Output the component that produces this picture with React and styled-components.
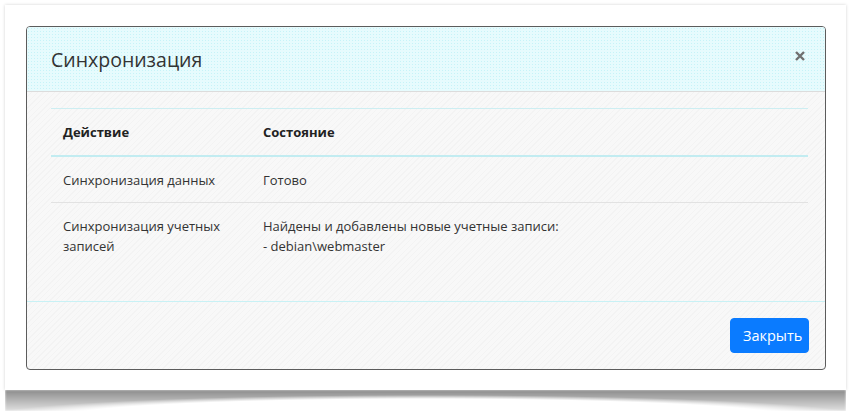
import styled, { createGlobalStyle } from "styled-components";

const GlobalStyle = createGlobalStyle`
  body {
    margin: 0;
    background: #fff;
    font-family: "Open Sans", "Noto Sans", sans-serif;
    color: #333;
  }
`;

const Page = styled.div`
  padding: 5px 0 0 5px;
  width: 841px;
`;

const Paper = styled.div`
  background: #fff;
  box-shadow: 0 0 3px rgba(0, 0, 0, 0.18);
  padding: 21px 20px 20px 21px;
`;

const CurlShadow = styled.div`
  height: 21px;
  background: linear-gradient(to bottom, rgba(0, 0, 0, 0.45), rgba(0, 0, 0, 0.12));
  -webkit-mask-image: radial-gradient(440px 22px at 50% 27px, transparent 82%, #000 100%);
  mask-image: radial-gradient(440px 22px at 50% 27px, transparent 82%, #000 100%);
  filter: blur(1px);
`;

const Modal = styled.div`
  border: 1px solid #5c5c5c;
  border-radius: 4px;
  overflow: hidden;
  display: flex;
  flex-direction: column;
  background-color: #f8f8f8;
  background-image: repeating-linear-gradient(
    -45deg,
    rgba(0, 0, 0, 0.018) 0 1px,
    transparent 1px 4px
  );
`;

const Header = styled.div`
  display: flex;
  align-items: center;
  justify-content: space-between;
  padding: 18px 19px 16px 24px;
  border-bottom: 1px solid #dcdcdc;
  background-color: #e6fbfd;
  background-image: radial-gradient(#c6f3f8 0.8px, transparent 1px);
  background-size: 3px 3px;
`;

const Title = styled.h5`
  margin: 0;
  font-size: 19.5px;
  font-weight: 400;
  line-height: 30px;
  color: #333;
`;

const CloseButton = styled.button`
  border: none;
  background: transparent;
  padding: 0;
  width: 12px;
  height: 12px;
  display: flex;
  align-items: center;
  justify-content: center;
  cursor: pointer;
  margin-top: -9px;
`;

const Body = styled.div`
  padding: 16px 17px 34px 24px;
`;

const Table = styled.table`
  width: 100%;
  border-collapse: collapse;
  font-size: 13px;
  color: #333;
  border-top: 1px solid #cdeef2;

  th,
  td {
    text-align: left;
    vertical-align: top;
  }

  th {
    padding: 13px 12px 12px;
    line-height: 21px;
    font-weight: 700;
    color: #222;
  }

  td {
    padding: 13px 12px 11px;
    line-height: 20px;
  }
`;

const HeadRow = styled.tr`
  border-bottom: 2px solid #c2ecf1;
`;

const Row = styled.tr`
  border-bottom: ${(p) => (p.$last ? "none" : "1px solid #e2e2e2")};

  td {
    min-height: 21px;
  }
`;

const ActionCell = styled.td`
  width: 176px;
  height: 21px;
`;

const Footer = styled.div`
  display: flex;
  justify-content: flex-end;
  padding: 16px;
  border-top: 1px solid #c8f1f5;
`;

const PrimaryButton = styled.button`
  background: #0a7bff;
  border: 1px solid #0a7bff;
  color: #fff;
  border-radius: 4px;
  font-family: "Open Sans", "Noto Sans", sans-serif;
  font-size: 14.5px;
  line-height: 21px;
  padding: 6px 12px;
  width: 79px;
  height: 35px;
`;

const rows = [
  { action: "Синхронизация данных", state: ["Готово"] },
  {
    action: "Синхронизация учетных записей",
    state: ["Найдены и добавлены новые учетные записи:", "- debian\\webmaster"],
  },
];

export default function App() {
  return (
    <>
      <GlobalStyle />
      <Page>
        <Paper>
          <Modal>
            <Header>
              <Title>Синхронизация</Title>
              <CloseButton aria-label="Закрыть">
                <svg width="10" height="10" viewBox="0 0 10 10">
                  <path
                    d="M1 1 L9 9 M9 1 L1 9"
                    stroke="#6f6f6f"
                    strokeWidth="2.4"
                    strokeLinecap="butt"
                  />
                </svg>
              </CloseButton>
            </Header>
            <Body>
              <Table>
                <thead>
                  <HeadRow>
                    <th>Действие</th>
                    <th>Состояние</th>
                  </HeadRow>
                </thead>
                <tbody>
                  {rows.map((r, i) => (
                    <Row key={i} $last={i === rows.length - 1}>
                      <ActionCell>{r.action}</ActionCell>
                      <td>
                        {r.state.map((line, j) => (
                          <div key={j}>{line}</div>
                        ))}
                      </td>
                    </Row>
                  ))}
                </tbody>
              </Table>
            </Body>
            <Footer>
              <PrimaryButton>Закрыть</PrimaryButton>
            </Footer>
          </Modal>
        </Paper>
        <CurlShadow />
      </Page>
    </>
  );
}
